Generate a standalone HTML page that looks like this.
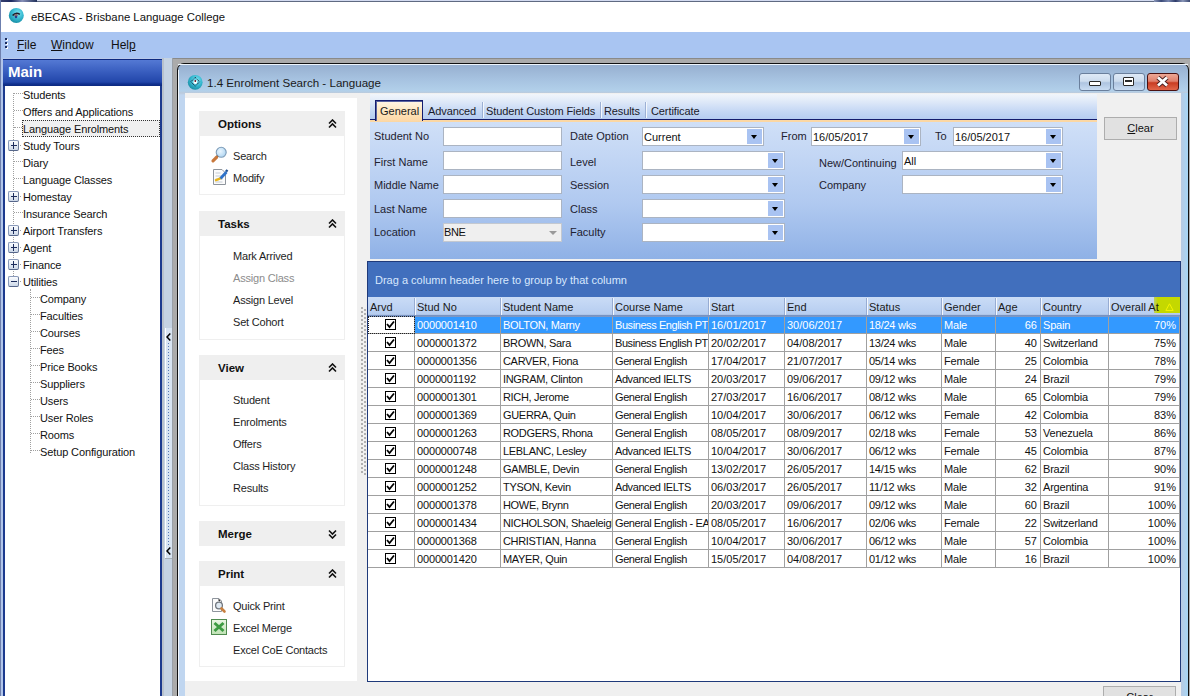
<!DOCTYPE html><html><head><meta charset="utf-8"><style>
*{box-sizing:border-box;margin:0;padding:0}
html,body{width:1190px;height:696px;overflow:hidden;background:#fff;font-family:"Liberation Sans",sans-serif;font-size:11px;color:#000}
div,svg{position:absolute}
.t{white-space:nowrap;line-height:1}
.gt{font-weight:bold;font-size:11.5px;white-space:nowrap;line-height:1;color:#111}
.item{white-space:nowrap;line-height:1;font-size:11px;color:#1e1e1e;letter-spacing:-0.2px}
.lbl{white-space:nowrap;line-height:1;font-size:11px;color:#1e2230}
.inp{height:19px;background:#fff;border:1px solid #abb4c2}
.dd{top:1px;right:1px;width:15px;height:15px;background:#a9c3f2}
.dd:after{content:"";position:absolute;left:4px;top:6px;border-left:3.5px solid transparent;border-right:3.5px solid transparent;border-top:4px solid #000}
.btn{background:#e1e1e1;border:1px solid #adadad;font-size:11px;text-align:center;line-height:20px;color:#111}
.cell{top:0;height:18px;border-right:1px solid #a0a0a0;border-bottom:1px solid #a0a0a0;white-space:nowrap;overflow:hidden;line-height:18px;padding-left:2px;font-size:11px;color:#111;letter-spacing:-0.2px}
.r{text-align:right;padding-right:3px;padding-left:0}
.sel .cell{background:#3399ff;color:#fff}
.cb{width:11px;height:11px;border:1px solid #000;background:#fff}
.ch{top:1px;height:18px;white-space:nowrap;line-height:19px;padding-left:2px;font-size:11px;color:#1a1a1a}
.pm{width:9px;height:9px;border:1px solid #7b8fae;background:linear-gradient(#fff,#dfe6f0)}
.dot{border-top:1px dotted #888}
</style></head><body>
<div style="left:0px;top:0px;width:1190px;height:32px;background:#fff"></div>
<div style="left:0px;top:0px;width:1190px;height:1px;background:#d2daf0"></div>
<div style="left:0px;top:1px;width:1190px;height:1px;background:#5f6a82"></div>
<div style="left:0px;top:0px;width:37px;height:2px;background:linear-gradient(90deg,#3a4270,#1c2a60 30%,#8890b8 60%,#20305a)"></div>
<div style="left:1154px;top:0px;width:36px;height:2px;background:linear-gradient(90deg,#8a96b8,#3a4a78 20%,#7a88b0 40%,#2e3c6a 60%,#8a96b8 80%,#3a4870)"></div>
<div style="left:0px;top:0px;width:1px;height:696px;background:#6c7fae"></div>
<svg style="left:8px;top:7px" width="17" height="17" viewBox="0 0 17 17">
<circle cx="8.3" cy="8.4" r="7.5" fill="url(#tg)"/>
<path d="M4.6 8.6 Q8 4.6 11.8 7.4" stroke="#1b1b2a" stroke-width="1.6" fill="none"/><circle cx="8" cy="8.4" r="1.7" fill="#8a6a6a"/><circle cx="8" cy="10" r="1.2" fill="#2a3a8a"/></svg>
<div class="t" style="left:31px;top:12px;font-size:11.3px;color:#111">eBECAS - Brisbane Language College</div>
<div style="left:1px;top:32px;width:1189px;height:27px;background:#a9c5f2"></div>
<div style="left:6px;top:39px;width:2px;height:2px;background:#fff"></div>
<div style="left:5px;top:38px;width:2px;height:2px;background:#1c2c5c"></div>
<div style="left:6px;top:43px;width:2px;height:2px;background:#fff"></div>
<div style="left:5px;top:42px;width:2px;height:2px;background:#1c2c5c"></div>
<div style="left:6px;top:47px;width:2px;height:2px;background:#fff"></div>
<div style="left:5px;top:46px;width:2px;height:2px;background:#1c2c5c"></div>
<div class="t" style="left:17px;top:39px;font-size:12px;color:#111"><u>F</u>ile</div>
<div class="t" style="left:51px;top:39px;font-size:12px;color:#111"><u>W</u>indow</div>
<div class="t" style="left:111px;top:39px;font-size:12px;color:#111">Hel<u>p</u></div>
<div style="left:0px;top:58px;width:3px;height:638px;background:#b2c6ea"></div>
<div style="left:0px;top:58px;width:1px;height:638px;background:#7f92bd"></div>
<div style="left:3px;top:59px;width:159px;height:637px;background:#fff;border:2px solid #1c3a8e;border-bottom:none"></div>
<div style="left:1px;top:58px;width:161px;height:1px;background:#b9c9ea"></div>
<div style="left:3px;top:59px;width:159px;height:27px;background:linear-gradient(#0e2a80 1px,#5479d4 1px,#3a5fc0 12px,#2246aa 23px,#10308e 25px,#0e2a80 27px)"></div>
<div style="left:0px;top:58px;width:3px;height:638px;background:#b2c6ea"></div>
<div style="left:0px;top:32px;width:1px;height:664px;background:#6f80ad"></div>
<div class="t" style="left:8px;top:64px;font-size:15px;font-weight:bold;color:#fff">Main</div>
<div style="left:13px;top:93px;width:1px;height:187px;border-left:1px dotted #a0a0a0"></div>
<div style="left:30px;top:289px;width:1px;height:164px;border-left:1px dotted #a0a0a0"></div>
<div style="left:14px;top:93px;width:9px;height:1px;border-top:1px dotted #a0a0a0"></div>
<div class="t" style="left:23px;top:90px;font-size:11px;color:#111;letter-spacing:-0.12px">Students</div>
<div style="left:14px;top:110px;width:9px;height:1px;border-top:1px dotted #a0a0a0"></div>
<div class="t" style="left:23px;top:107px;font-size:11px;color:#111;letter-spacing:-0.12px">Offers and Applications</div>
<div style="left:22px;top:120px;width:138px;height:17px;background:#f0f0f0;border:1px dotted #333"></div>
<div style="left:14px;top:127px;width:8px;height:1px;border-top:1px dotted #a0a0a0"></div>
<div class="t" style="left:23px;top:124px;font-size:11px;color:#111;letter-spacing:-0.12px">Language Enrolments</div>
<div style="left:8px;top:140px;width:11px;height:11px;border:1px solid #8a9aba;border-bottom-color:#56668a;border-right-color:#6a7a9a;border-radius:2px;background:linear-gradient(#fafcff,#cdd8e8)"></div>
<div style="left:11px;top:145px;width:6px;height:1px;background:#1c2c5c"></div>
<div style="left:13px;top:142px;width:1px;height:7px;background:#1c2c5c"></div>
<div style="left:20px;top:145px;width:1px;height:1px;background:#a0a0a0"></div>
<div class="t" style="left:23px;top:141px;font-size:11px;color:#111;letter-spacing:-0.12px">Study Tours</div>
<div style="left:14px;top:161px;width:9px;height:1px;border-top:1px dotted #a0a0a0"></div>
<div class="t" style="left:23px;top:158px;font-size:11px;color:#111;letter-spacing:-0.12px">Diary</div>
<div style="left:14px;top:178px;width:9px;height:1px;border-top:1px dotted #a0a0a0"></div>
<div class="t" style="left:23px;top:175px;font-size:11px;color:#111;letter-spacing:-0.12px">Language Classes</div>
<div style="left:8px;top:191px;width:11px;height:11px;border:1px solid #8a9aba;border-bottom-color:#56668a;border-right-color:#6a7a9a;border-radius:2px;background:linear-gradient(#fafcff,#cdd8e8)"></div>
<div style="left:11px;top:196px;width:6px;height:1px;background:#1c2c5c"></div>
<div style="left:13px;top:193px;width:1px;height:7px;background:#1c2c5c"></div>
<div style="left:20px;top:196px;width:1px;height:1px;background:#a0a0a0"></div>
<div class="t" style="left:23px;top:192px;font-size:11px;color:#111;letter-spacing:-0.12px">Homestay</div>
<div style="left:14px;top:212px;width:9px;height:1px;border-top:1px dotted #a0a0a0"></div>
<div class="t" style="left:23px;top:209px;font-size:11px;color:#111;letter-spacing:-0.12px">Insurance Search</div>
<div style="left:8px;top:225px;width:11px;height:11px;border:1px solid #8a9aba;border-bottom-color:#56668a;border-right-color:#6a7a9a;border-radius:2px;background:linear-gradient(#fafcff,#cdd8e8)"></div>
<div style="left:11px;top:230px;width:6px;height:1px;background:#1c2c5c"></div>
<div style="left:13px;top:227px;width:1px;height:7px;background:#1c2c5c"></div>
<div style="left:20px;top:230px;width:1px;height:1px;background:#a0a0a0"></div>
<div class="t" style="left:23px;top:226px;font-size:11px;color:#111;letter-spacing:-0.12px">Airport Transfers</div>
<div style="left:8px;top:242px;width:11px;height:11px;border:1px solid #8a9aba;border-bottom-color:#56668a;border-right-color:#6a7a9a;border-radius:2px;background:linear-gradient(#fafcff,#cdd8e8)"></div>
<div style="left:11px;top:247px;width:6px;height:1px;background:#1c2c5c"></div>
<div style="left:13px;top:244px;width:1px;height:7px;background:#1c2c5c"></div>
<div style="left:20px;top:247px;width:1px;height:1px;background:#a0a0a0"></div>
<div class="t" style="left:23px;top:243px;font-size:11px;color:#111;letter-spacing:-0.12px">Agent</div>
<div style="left:8px;top:259px;width:11px;height:11px;border:1px solid #8a9aba;border-bottom-color:#56668a;border-right-color:#6a7a9a;border-radius:2px;background:linear-gradient(#fafcff,#cdd8e8)"></div>
<div style="left:11px;top:264px;width:6px;height:1px;background:#1c2c5c"></div>
<div style="left:13px;top:261px;width:1px;height:7px;background:#1c2c5c"></div>
<div style="left:20px;top:264px;width:1px;height:1px;background:#a0a0a0"></div>
<div class="t" style="left:23px;top:260px;font-size:11px;color:#111;letter-spacing:-0.12px">Finance</div>
<div style="left:8px;top:276px;width:11px;height:11px;border:1px solid #8a9aba;border-bottom-color:#56668a;border-right-color:#6a7a9a;border-radius:2px;background:linear-gradient(#fafcff,#cdd8e8)"></div>
<div style="left:11px;top:281px;width:6px;height:1px;background:#1c2c5c"></div>
<div style="left:20px;top:281px;width:1px;height:1px;background:#a0a0a0"></div>
<div class="t" style="left:23px;top:277px;font-size:11px;color:#111;letter-spacing:-0.12px">Utilities</div>
<div style="left:31px;top:297px;width:9px;height:1px;border-top:1px dotted #a0a0a0"></div>
<div class="t" style="left:40px;top:294px;font-size:11px;color:#111;letter-spacing:-0.12px">Company</div>
<div style="left:31px;top:314px;width:9px;height:1px;border-top:1px dotted #a0a0a0"></div>
<div class="t" style="left:40px;top:311px;font-size:11px;color:#111;letter-spacing:-0.12px">Faculties</div>
<div style="left:31px;top:331px;width:9px;height:1px;border-top:1px dotted #a0a0a0"></div>
<div class="t" style="left:40px;top:328px;font-size:11px;color:#111;letter-spacing:-0.12px">Courses</div>
<div style="left:31px;top:348px;width:9px;height:1px;border-top:1px dotted #a0a0a0"></div>
<div class="t" style="left:40px;top:345px;font-size:11px;color:#111;letter-spacing:-0.12px">Fees</div>
<div style="left:31px;top:365px;width:9px;height:1px;border-top:1px dotted #a0a0a0"></div>
<div class="t" style="left:40px;top:362px;font-size:11px;color:#111;letter-spacing:-0.12px">Price Books</div>
<div style="left:31px;top:382px;width:9px;height:1px;border-top:1px dotted #a0a0a0"></div>
<div class="t" style="left:40px;top:379px;font-size:11px;color:#111;letter-spacing:-0.12px">Suppliers</div>
<div style="left:31px;top:399px;width:9px;height:1px;border-top:1px dotted #a0a0a0"></div>
<div class="t" style="left:40px;top:396px;font-size:11px;color:#111;letter-spacing:-0.12px">Users</div>
<div style="left:31px;top:416px;width:9px;height:1px;border-top:1px dotted #a0a0a0"></div>
<div class="t" style="left:40px;top:413px;font-size:11px;color:#111;letter-spacing:-0.12px">User Roles</div>
<div style="left:31px;top:433px;width:9px;height:1px;border-top:1px dotted #a0a0a0"></div>
<div class="t" style="left:40px;top:430px;font-size:11px;color:#111;letter-spacing:-0.12px">Rooms</div>
<div style="left:31px;top:450px;width:9px;height:1px;border-top:1px dotted #a0a0a0"></div>
<div class="t" style="left:40px;top:447px;font-size:11px;color:#111;letter-spacing:-0.12px">Setup Configuration</div>
<div style="left:162px;top:58px;width:11px;height:638px;background:#c5d3e3"></div>
<div style="left:162px;top:58px;width:2px;height:638px;background:#b9c2cc"></div>
<div style="left:172px;top:58px;width:1px;height:638px;background:#9aa0a8"></div>
<div style="left:165px;top:328px;width:7px;height:231px;background:linear-gradient(90deg,#fff 1px,#d8e4f2 1px);border-bottom:1px solid #a8b0b8"></div>
<div style="left:168px;top:343px;width:1px;height:1px;background:#5a7cb8"></div>
<div style="left:168px;top:346px;width:1px;height:1px;background:#5a7cb8"></div>
<div style="left:168px;top:349px;width:1px;height:1px;background:#5a7cb8"></div>
<div style="left:168px;top:352px;width:1px;height:1px;background:#5a7cb8"></div>
<div style="left:168px;top:355px;width:1px;height:1px;background:#5a7cb8"></div>
<div style="left:168px;top:358px;width:1px;height:1px;background:#5a7cb8"></div>
<div style="left:168px;top:361px;width:1px;height:1px;background:#5a7cb8"></div>
<div style="left:168px;top:364px;width:1px;height:1px;background:#5a7cb8"></div>
<div style="left:168px;top:367px;width:1px;height:1px;background:#5a7cb8"></div>
<div style="left:168px;top:370px;width:1px;height:1px;background:#5a7cb8"></div>
<div style="left:168px;top:373px;width:1px;height:1px;background:#5a7cb8"></div>
<div style="left:168px;top:376px;width:1px;height:1px;background:#5a7cb8"></div>
<div style="left:168px;top:379px;width:1px;height:1px;background:#5a7cb8"></div>
<div style="left:168px;top:382px;width:1px;height:1px;background:#5a7cb8"></div>
<div style="left:168px;top:385px;width:1px;height:1px;background:#5a7cb8"></div>
<div style="left:168px;top:388px;width:1px;height:1px;background:#5a7cb8"></div>
<div style="left:168px;top:391px;width:1px;height:1px;background:#5a7cb8"></div>
<div style="left:168px;top:394px;width:1px;height:1px;background:#5a7cb8"></div>
<div style="left:168px;top:397px;width:1px;height:1px;background:#5a7cb8"></div>
<div style="left:168px;top:400px;width:1px;height:1px;background:#5a7cb8"></div>
<div style="left:168px;top:403px;width:1px;height:1px;background:#5a7cb8"></div>
<div style="left:168px;top:406px;width:1px;height:1px;background:#5a7cb8"></div>
<div style="left:168px;top:409px;width:1px;height:1px;background:#5a7cb8"></div>
<div style="left:168px;top:412px;width:1px;height:1px;background:#5a7cb8"></div>
<div style="left:168px;top:415px;width:1px;height:1px;background:#5a7cb8"></div>
<div style="left:168px;top:418px;width:1px;height:1px;background:#5a7cb8"></div>
<div style="left:168px;top:421px;width:1px;height:1px;background:#5a7cb8"></div>
<div style="left:168px;top:424px;width:1px;height:1px;background:#5a7cb8"></div>
<div style="left:168px;top:427px;width:1px;height:1px;background:#5a7cb8"></div>
<div style="left:168px;top:430px;width:1px;height:1px;background:#5a7cb8"></div>
<div style="left:168px;top:433px;width:1px;height:1px;background:#5a7cb8"></div>
<div style="left:168px;top:436px;width:1px;height:1px;background:#5a7cb8"></div>
<div style="left:168px;top:439px;width:1px;height:1px;background:#5a7cb8"></div>
<div style="left:168px;top:442px;width:1px;height:1px;background:#5a7cb8"></div>
<div style="left:168px;top:445px;width:1px;height:1px;background:#5a7cb8"></div>
<div style="left:168px;top:448px;width:1px;height:1px;background:#5a7cb8"></div>
<div style="left:168px;top:451px;width:1px;height:1px;background:#5a7cb8"></div>
<div style="left:168px;top:454px;width:1px;height:1px;background:#5a7cb8"></div>
<div style="left:168px;top:457px;width:1px;height:1px;background:#5a7cb8"></div>
<div style="left:168px;top:460px;width:1px;height:1px;background:#5a7cb8"></div>
<div style="left:168px;top:463px;width:1px;height:1px;background:#5a7cb8"></div>
<div style="left:168px;top:466px;width:1px;height:1px;background:#5a7cb8"></div>
<div style="left:168px;top:469px;width:1px;height:1px;background:#5a7cb8"></div>
<div style="left:168px;top:472px;width:1px;height:1px;background:#5a7cb8"></div>
<div style="left:168px;top:475px;width:1px;height:1px;background:#5a7cb8"></div>
<div style="left:168px;top:478px;width:1px;height:1px;background:#5a7cb8"></div>
<div style="left:168px;top:481px;width:1px;height:1px;background:#5a7cb8"></div>
<div style="left:168px;top:484px;width:1px;height:1px;background:#5a7cb8"></div>
<div style="left:168px;top:487px;width:1px;height:1px;background:#5a7cb8"></div>
<div style="left:168px;top:490px;width:1px;height:1px;background:#5a7cb8"></div>
<div style="left:168px;top:493px;width:1px;height:1px;background:#5a7cb8"></div>
<div style="left:168px;top:496px;width:1px;height:1px;background:#5a7cb8"></div>
<div style="left:168px;top:499px;width:1px;height:1px;background:#5a7cb8"></div>
<div style="left:168px;top:502px;width:1px;height:1px;background:#5a7cb8"></div>
<div style="left:168px;top:505px;width:1px;height:1px;background:#5a7cb8"></div>
<div style="left:168px;top:508px;width:1px;height:1px;background:#5a7cb8"></div>
<div style="left:168px;top:511px;width:1px;height:1px;background:#5a7cb8"></div>
<div style="left:168px;top:514px;width:1px;height:1px;background:#5a7cb8"></div>
<div style="left:168px;top:517px;width:1px;height:1px;background:#5a7cb8"></div>
<div style="left:168px;top:520px;width:1px;height:1px;background:#5a7cb8"></div>
<div style="left:168px;top:523px;width:1px;height:1px;background:#5a7cb8"></div>
<div style="left:168px;top:526px;width:1px;height:1px;background:#5a7cb8"></div>
<div style="left:168px;top:529px;width:1px;height:1px;background:#5a7cb8"></div>
<div style="left:168px;top:532px;width:1px;height:1px;background:#5a7cb8"></div>
<div style="left:168px;top:535px;width:1px;height:1px;background:#5a7cb8"></div>
<div style="left:168px;top:538px;width:1px;height:1px;background:#5a7cb8"></div>
<div style="left:168px;top:541px;width:1px;height:1px;background:#5a7cb8"></div>
<div style="left:168px;top:544px;width:1px;height:1px;background:#5a7cb8"></div>
<svg style="left:166px;top:333px" width="5" height="8" viewBox="0 0 5 8"><path d="M4.3 0.5 L1 4 L4.3 7.5" stroke="#000" stroke-width="1.5" fill="none"/></svg>
<svg style="left:166px;top:547px" width="5" height="8" viewBox="0 0 5 8"><path d="M4.3 0.5 L1 4 L4.3 7.5" stroke="#000" stroke-width="1.5" fill="none"/></svg>
<div style="left:173px;top:58px;width:1017px;height:638px;background:#ababab"></div>
<div style="left:173px;top:58px;width:1017px;height:1px;background:#8a8a8a"></div>
<div style="left:177px;top:63px;width:1012px;height:640px;background:linear-gradient(#97b0d0 1px,#a6c2e0 15px,#b2d0ea 27px,#bccadb 29px,#c0d6f0 31px);border:1px solid #111;border-radius:7px 7px 0 0"></div>
<div style="left:178px;top:64px;width:1010px;height:1px;background:#eef5fc"></div>
<div style="left:178px;top:70px;width:1px;height:626px;background:#f2f7fc"></div>
<svg style="left:187px;top:74px" width="17" height="17" viewBox="0 0 17 17">
<defs><radialGradient id="tg" cx="0.6" cy="0.35" r="0.75"><stop offset="0" stop-color="#7fe6f4"/><stop offset="0.5" stop-color="#35b8d0"/><stop offset="1" stop-color="#12849a"/></radialGradient></defs>
<circle cx="8.2" cy="8.3" r="7.4" fill="url(#tg)"/>
<path d="M8.2 3.4 L12.6 7.8 L8.2 12.2 L3.8 7.8 Z" fill="none" stroke="#20203a" stroke-width="1" stroke-dasharray="1.2 0.8"/>
<circle cx="8.3" cy="8" r="1.9" fill="#fff"/><circle cx="8.3" cy="7" r="0.9" fill="#5a1020"/></svg>
<div class="t" style="left:207px;top:77px;font-size:11.6px;color:#1a1a1a">1.4 Enrolment Search - Language</div>
<div style="left:1079px;top:73px;width:32px;height:18px;border:1px solid #6a7f9c;border-radius:3px;background:linear-gradient(#dfeaf7,#cddcee 45%,#aec4e0 55%,#c9dcf2)"></div>
<div style="left:1089px;top:81px;width:12px;height:5px;border:1px solid #2a2a2a;background:#fff;border-radius:1px"></div>
<div style="left:1113px;top:73px;width:32px;height:18px;border:1px solid #6a7f9c;border-radius:3px;background:linear-gradient(#dfeaf7,#cddcee 45%,#aec4e0 55%,#c9dcf2)"></div>
<div style="left:1123px;top:77px;width:11px;height:9px;border:1px solid #2a2a2a;border-radius:1px;background:#fff"></div>
<div style="left:1125px;top:80px;width:7px;height:2px;background:#2a2a2a"></div>
<div style="left:1147px;top:73px;width:32px;height:18px;border:1px solid #4a1010;border-radius:3px;background:linear-gradient(#eea896,#e0806c 45%,#c93c22 55%,#e2664a)"></div>
<svg style="left:1155px;top:75px" width="15" height="13" viewBox="0 0 15 13"><path d="M3 2.5 L12 10.5 M12 2.5 L3 10.5" stroke="#4a2020" stroke-width="4.6"/><path d="M3 2.5 L12 10.5 M12 2.5 L3 10.5" stroke="#fff" stroke-width="2.8"/></svg>
<div style="left:185px;top:93px;width:996px;height:603px;background:#f0f0f0"></div>
<div style="left:1181px;top:93px;width:7px;height:603px;background:linear-gradient(90deg,#b8cae2,#a6d6f6)"></div>
<div style="left:185px;top:98px;width:172px;height:583px;background:#fff"></div>
<div style="left:199px;top:111px;width:146px;height:25px;background:#efefef"></div>
<div class="gt" style="left:218px;top:119px;">Options</div>
<svg style="left:328px;top:119px" width="9" height="10" viewBox="0 0 9 10"><path d="M1 4.5 L4.5 1 L8 4.5 M1 8.5 L4.5 5 L8 8.5" stroke="#111" stroke-width="1.6" fill="none"/></svg>
<div style="left:199px;top:136px;width:146px;height:59px;background:#fff;border:1px solid #efefef;border-top:none"></div>
<div class="item" style="left:233px;top:151px;color:#1e1e1e">Search</div>
<div class="item" style="left:233px;top:173px;color:#1e1e1e">Modify</div>
<svg style="left:208px;top:144px" width="22" height="22" viewBox="208 144 22 22">
<defs><radialGradient id="lens" cx="0.4" cy="0.4" r="0.7"><stop offset="0" stop-color="#eaf6ff"/><stop offset="1" stop-color="#a9d2f0"/></radialGradient></defs>
<circle cx="221.2" cy="152.3" r="5" fill="url(#lens)" stroke="#7e9cb8" stroke-width="1.1"/>
<path d="M217.6 156 L216.4 157.2" stroke="#333" stroke-width="2"/>
<path d="M216.5 157.3 L213 160.8" stroke="#c8783c" stroke-width="3.2" stroke-linecap="round"/></svg>
<svg style="left:210px;top:166px" width="20" height="21" viewBox="210 166 20 21">
<path d="M213.5 169.5 H222 L225.5 173 V184.5 H213.5 Z" fill="#fbfbfb" stroke="#8e949c" stroke-width="1"/>
<path d="M215.5 173h5M215.5 176h7M215.5 179h7M215.5 182h7" stroke="#b8c0cc" stroke-width="0.8"/>
<path d="M215 180.5 Q218 179.5 221 178" stroke="#e8b418" stroke-width="2.2" fill="none"/>
<path d="M220.5 178.5 L226.5 172" stroke="#2f73c9" stroke-width="2.8"/><path d="M226 171.5 L227.5 170" stroke="#1d4f90" stroke-width="2.4"/></svg>
<div style="left:199px;top:211px;width:146px;height:25px;background:#efefef"></div>
<div class="gt" style="left:218px;top:219px;">Tasks</div>
<svg style="left:328px;top:219px" width="9" height="10" viewBox="0 0 9 10"><path d="M1 4.5 L4.5 1 L8 4.5 M1 8.5 L4.5 5 L8 8.5" stroke="#111" stroke-width="1.6" fill="none"/></svg>
<div style="left:199px;top:236px;width:146px;height:104px;background:#fff;border:1px solid #efefef;border-top:none"></div>
<div class="item" style="left:233px;top:251px;color:#1e1e1e">Mark Arrived</div>
<div class="item" style="left:233px;top:273px;color:#8c8c8c">Assign Class</div>
<div class="item" style="left:233px;top:295px;color:#1e1e1e">Assign Level</div>
<div class="item" style="left:233px;top:317px;color:#1e1e1e">Set Cohort</div>
<div style="left:199px;top:355px;width:146px;height:25px;background:#efefef"></div>
<div class="gt" style="left:218px;top:363px;">View</div>
<svg style="left:328px;top:363px" width="9" height="10" viewBox="0 0 9 10"><path d="M1 4.5 L4.5 1 L8 4.5 M1 8.5 L4.5 5 L8 8.5" stroke="#111" stroke-width="1.6" fill="none"/></svg>
<div style="left:199px;top:380px;width:146px;height:126px;background:#fff;border:1px solid #efefef;border-top:none"></div>
<div class="item" style="left:233px;top:395px;color:#1e1e1e">Student</div>
<div class="item" style="left:233px;top:417px;color:#1e1e1e">Enrolments</div>
<div class="item" style="left:233px;top:439px;color:#1e1e1e">Offers</div>
<div class="item" style="left:233px;top:461px;color:#1e1e1e">Class History</div>
<div class="item" style="left:233px;top:483px;color:#1e1e1e">Results</div>
<div style="left:199px;top:521px;width:146px;height:25px;background:#efefef"></div>
<div class="gt" style="left:218px;top:529px;">Merge</div>
<svg style="left:328px;top:529px" width="9" height="10" viewBox="0 0 9 10"><path d="M1 1.5 L4.5 5 L8 1.5 M1 5.5 L4.5 9 L8 5.5" stroke="#111" stroke-width="1.6" fill="none"/></svg>
<div style="left:199px;top:561px;width:146px;height:25px;background:#efefef"></div>
<div class="gt" style="left:218px;top:569px;">Print</div>
<svg style="left:328px;top:569px" width="9" height="10" viewBox="0 0 9 10"><path d="M1 4.5 L4.5 1 L8 4.5 M1 8.5 L4.5 5 L8 8.5" stroke="#111" stroke-width="1.6" fill="none"/></svg>
<div style="left:199px;top:586px;width:146px;height:81px;background:#fff;border:1px solid #efefef;border-top:none"></div>
<div class="item" style="left:233px;top:601px;color:#1e1e1e">Quick Print</div>
<div class="item" style="left:233px;top:623px;color:#1e1e1e">Excel Merge</div>
<div class="item" style="left:233px;top:645px;color:#1e1e1e">Excel CoE Contacts</div>
<svg style="left:210px;top:596px" width="18" height="19" viewBox="210 596 18 19">
<path d="M212.5 598.5 H219 L221.5 601 V611.5 H212.5 Z" fill="#fbfbfb" stroke="#8e949c"/>
<circle cx="219" cy="605.5" r="3.4" fill="#dfe9f2" stroke="#70767e" stroke-width="1.3"/>
<path d="M218.5 599.5 L220 601" stroke="#333" stroke-width="1.4"/>
<path d="M221.5 608.5 L224.5 611.5" stroke="#c88040" stroke-width="2.6" stroke-linecap="round"/></svg>
<svg style="left:210px;top:618px" width="18" height="18" viewBox="210 618 18 18">
<defs><linearGradient id="xg" x1="0" y1="0" x2="0" y2="1"><stop offset="0" stop-color="#eaf6e4"/><stop offset="1" stop-color="#bfe2b4"/></linearGradient></defs>
<rect x="211.5" y="619.5" width="15" height="15" fill="url(#xg)" stroke="#4f8a4f"/>
<path d="M214.5 623 L223.5 631 M223.5 623 L214.5 631" stroke="#3d9b42" stroke-width="3"/></svg>
<div style="left:361px;top:307px;width:2px;height:2px;background:#b0b0b0"></div>
<div style="left:364px;top:309px;width:2px;height:2px;background:#b0b0b0"></div>
<div style="left:361px;top:311px;width:2px;height:2px;background:#b0b0b0"></div>
<div style="left:364px;top:313px;width:2px;height:2px;background:#b0b0b0"></div>
<div style="left:361px;top:315px;width:2px;height:2px;background:#b0b0b0"></div>
<div style="left:364px;top:317px;width:2px;height:2px;background:#b0b0b0"></div>
<div style="left:361px;top:319px;width:2px;height:2px;background:#b0b0b0"></div>
<div style="left:364px;top:321px;width:2px;height:2px;background:#b0b0b0"></div>
<div style="left:361px;top:323px;width:2px;height:2px;background:#b0b0b0"></div>
<div style="left:364px;top:325px;width:2px;height:2px;background:#b0b0b0"></div>
<div style="left:361px;top:327px;width:2px;height:2px;background:#b0b0b0"></div>
<div style="left:364px;top:329px;width:2px;height:2px;background:#b0b0b0"></div>
<div style="left:361px;top:331px;width:2px;height:2px;background:#b0b0b0"></div>
<div style="left:364px;top:333px;width:2px;height:2px;background:#b0b0b0"></div>
<div style="left:361px;top:335px;width:2px;height:2px;background:#b0b0b0"></div>
<div style="left:364px;top:337px;width:2px;height:2px;background:#b0b0b0"></div>
<div style="left:361px;top:339px;width:2px;height:2px;background:#b0b0b0"></div>
<div style="left:364px;top:341px;width:2px;height:2px;background:#b0b0b0"></div>
<div style="left:361px;top:343px;width:2px;height:2px;background:#b0b0b0"></div>
<div style="left:364px;top:345px;width:2px;height:2px;background:#b0b0b0"></div>
<div style="left:361px;top:347px;width:2px;height:2px;background:#b0b0b0"></div>
<div style="left:364px;top:349px;width:2px;height:2px;background:#b0b0b0"></div>
<div style="left:361px;top:351px;width:2px;height:2px;background:#b0b0b0"></div>
<div style="left:364px;top:353px;width:2px;height:2px;background:#b0b0b0"></div>
<div style="left:361px;top:355px;width:2px;height:2px;background:#b0b0b0"></div>
<div style="left:364px;top:357px;width:2px;height:2px;background:#b0b0b0"></div>
<div style="left:361px;top:359px;width:2px;height:2px;background:#b0b0b0"></div>
<div style="left:364px;top:361px;width:2px;height:2px;background:#b0b0b0"></div>
<div style="left:361px;top:363px;width:2px;height:2px;background:#b0b0b0"></div>
<div style="left:364px;top:365px;width:2px;height:2px;background:#b0b0b0"></div>
<div style="left:361px;top:367px;width:2px;height:2px;background:#b0b0b0"></div>
<div style="left:364px;top:369px;width:2px;height:2px;background:#b0b0b0"></div>
<div style="left:361px;top:371px;width:2px;height:2px;background:#b0b0b0"></div>
<div style="left:364px;top:373px;width:2px;height:2px;background:#b0b0b0"></div>
<div style="left:361px;top:375px;width:2px;height:2px;background:#b0b0b0"></div>
<div style="left:364px;top:377px;width:2px;height:2px;background:#b0b0b0"></div>
<div style="left:361px;top:379px;width:2px;height:2px;background:#b0b0b0"></div>
<div style="left:364px;top:381px;width:2px;height:2px;background:#b0b0b0"></div>
<div style="left:361px;top:383px;width:2px;height:2px;background:#b0b0b0"></div>
<div style="left:364px;top:385px;width:2px;height:2px;background:#b0b0b0"></div>
<div style="left:361px;top:387px;width:2px;height:2px;background:#b0b0b0"></div>
<div style="left:364px;top:389px;width:2px;height:2px;background:#b0b0b0"></div>
<div style="left:361px;top:391px;width:2px;height:2px;background:#b0b0b0"></div>
<div style="left:364px;top:393px;width:2px;height:2px;background:#b0b0b0"></div>
<div style="left:361px;top:395px;width:2px;height:2px;background:#b0b0b0"></div>
<div style="left:364px;top:397px;width:2px;height:2px;background:#b0b0b0"></div>
<div style="left:361px;top:399px;width:2px;height:2px;background:#b0b0b0"></div>
<div style="left:364px;top:401px;width:2px;height:2px;background:#b0b0b0"></div>
<div style="left:361px;top:403px;width:2px;height:2px;background:#b0b0b0"></div>
<div style="left:364px;top:405px;width:2px;height:2px;background:#b0b0b0"></div>
<div style="left:361px;top:407px;width:2px;height:2px;background:#b0b0b0"></div>
<div style="left:364px;top:409px;width:2px;height:2px;background:#b0b0b0"></div>
<div style="left:361px;top:411px;width:2px;height:2px;background:#b0b0b0"></div>
<div style="left:364px;top:413px;width:2px;height:2px;background:#b0b0b0"></div>
<div style="left:361px;top:415px;width:2px;height:2px;background:#b0b0b0"></div>
<div style="left:364px;top:417px;width:2px;height:2px;background:#b0b0b0"></div>
<div style="left:361px;top:419px;width:2px;height:2px;background:#b0b0b0"></div>
<div style="left:364px;top:421px;width:2px;height:2px;background:#b0b0b0"></div>
<div style="left:361px;top:423px;width:2px;height:2px;background:#b0b0b0"></div>
<div style="left:364px;top:425px;width:2px;height:2px;background:#b0b0b0"></div>
<div style="left:361px;top:427px;width:2px;height:2px;background:#b0b0b0"></div>
<div style="left:364px;top:429px;width:2px;height:2px;background:#b0b0b0"></div>
<div style="left:361px;top:431px;width:2px;height:2px;background:#b0b0b0"></div>
<div style="left:364px;top:433px;width:2px;height:2px;background:#b0b0b0"></div>
<div style="left:361px;top:435px;width:2px;height:2px;background:#b0b0b0"></div>
<div style="left:364px;top:437px;width:2px;height:2px;background:#b0b0b0"></div>
<div style="left:361px;top:439px;width:2px;height:2px;background:#b0b0b0"></div>
<div style="left:364px;top:441px;width:2px;height:2px;background:#b0b0b0"></div>
<div style="left:361px;top:443px;width:2px;height:2px;background:#b0b0b0"></div>
<div style="left:364px;top:445px;width:2px;height:2px;background:#b0b0b0"></div>
<div style="left:361px;top:447px;width:2px;height:2px;background:#b0b0b0"></div>
<div style="left:364px;top:449px;width:2px;height:2px;background:#b0b0b0"></div>
<div style="left:361px;top:451px;width:2px;height:2px;background:#b0b0b0"></div>
<div style="left:364px;top:453px;width:2px;height:2px;background:#b0b0b0"></div>
<div style="left:361px;top:455px;width:2px;height:2px;background:#b0b0b0"></div>
<div style="left:364px;top:457px;width:2px;height:2px;background:#b0b0b0"></div>
<div style="left:361px;top:459px;width:2px;height:2px;background:#b0b0b0"></div>
<div style="left:364px;top:461px;width:2px;height:2px;background:#b0b0b0"></div>
<div style="left:361px;top:463px;width:2px;height:2px;background:#b0b0b0"></div>
<div style="left:364px;top:465px;width:2px;height:2px;background:#b0b0b0"></div>
<div style="left:361px;top:467px;width:2px;height:2px;background:#b0b0b0"></div>
<div style="left:364px;top:469px;width:2px;height:2px;background:#b0b0b0"></div>
<div style="left:361px;top:471px;width:2px;height:2px;background:#b0b0b0"></div>
<div style="left:364px;top:473px;width:2px;height:2px;background:#b0b0b0"></div>
<div style="left:370px;top:94px;width:727px;height:165px;background:linear-gradient(#dfeafa 0px,#cfdff7 30px,#b0c9f0 110px,#8fb1e6 165px)"></div>
<div style="left:370px;top:94px;width:727px;height:26px;background:linear-gradient(#f1f5fb,#e3ecf9 6px,#c3d6f4 18px,#b3cbf0 26px)"></div>
<div style="left:370px;top:119px;width:727px;height:1px;background:#141c6e"></div>
<div style="left:370px;top:120px;width:727px;height:2px;background:#fbd7a4"></div>
<div style="left:375px;top:100px;width:48px;height:21px;background:linear-gradient(#fff6e6,#fde6c0 50%,#fdd8a6);border:1px solid #141c6e;border-bottom:none;box-shadow:inset 1px 1px #5a64a0"></div>
<div class="t" style="left:380px;top:106px;font-size:11px;color:#1a1a1a">General</div>
<div class="t" style="left:428px;top:106px;font-size:11px;color:#1a1a2a;letter-spacing:-0.1px">Advanced</div>
<div style="left:482px;top:102px;width:1px;height:16px;background:#9cb0d4;box-shadow:1px 0 #f4f8fd"></div>
<div class="t" style="left:486px;top:106px;font-size:11px;color:#1a1a2a;letter-spacing:-0.1px">Student Custom Fields</div>
<div style="left:600px;top:102px;width:1px;height:16px;background:#9cb0d4;box-shadow:1px 0 #f4f8fd"></div>
<div class="t" style="left:604px;top:106px;font-size:11px;color:#1a1a2a;letter-spacing:-0.1px">Results</div>
<div style="left:645px;top:102px;width:1px;height:16px;background:#9cb0d4;box-shadow:1px 0 #f4f8fd"></div>
<div class="t" style="left:651px;top:106px;font-size:11px;color:#1a1a2a;letter-spacing:-0.1px">Certificate</div>
<div class="lbl" style="left:374px;top:131px;">Student No</div>
<div class="lbl" style="left:374px;top:157px;">First Name</div>
<div class="lbl" style="left:374px;top:180px;">Middle Name</div>
<div class="lbl" style="left:374px;top:204px;">Last Name</div>
<div class="lbl" style="left:374px;top:227px;">Location</div>
<div class="lbl" style="left:570px;top:131px;">Date Option</div>
<div class="lbl" style="left:570px;top:157px;">Level</div>
<div class="lbl" style="left:570px;top:180px;">Session</div>
<div class="lbl" style="left:570px;top:204px;">Class</div>
<div class="lbl" style="left:570px;top:227px;">Faculty</div>
<div style="left:443px;top:127px;width:119px;height:19px;background:#fff;border:1px solid #abb4c2"></div>
<div style="left:443px;top:151px;width:119px;height:19px;background:#fff;border:1px solid #abb4c2"></div>
<div style="left:443px;top:175px;width:119px;height:19px;background:#fff;border:1px solid #abb4c2"></div>
<div style="left:443px;top:199px;width:119px;height:19px;background:#fff;border:1px solid #abb4c2"></div>
<div style="left:443px;top:223px;width:119px;height:19px;background:#efefef;border:1px solid #c3c8d0"></div>
<div class="lbl" style="left:444px;top:227px;color:#111;letter-spacing:-0.4px">BNE</div>
<svg style="left:549px;top:231px" width="8" height="4" viewBox="0 0 8 4"><path d="M0 0 H8 L4 4Z" fill="#9a9a9a"/></svg>
<div class="inp" style="left:642px;top:127px;width:122px"><div class="dd"></div></div>
<div class="lbl" style="left:644px;top:132px;color:#111">Current</div>
<div class="inp" style="left:642px;top:151px;width:143px"><div class="dd"></div></div>
<div class="inp" style="left:642px;top:175px;width:143px"><div class="dd"></div></div>
<div class="inp" style="left:642px;top:199px;width:143px"><div class="dd"></div></div>
<div class="inp" style="left:642px;top:223px;width:143px"><div class="dd"></div></div>
<div class="lbl" style="left:781px;top:131px;">From</div>
<div class="inp" style="left:811px;top:127px;width:110px"><div class="dd"></div></div>
<div class="lbl" style="left:813px;top:132px;color:#111">16/05/2017</div>
<div class="lbl" style="left:935px;top:131px;">To</div>
<div class="inp" style="left:953px;top:127px;width:110px"><div class="dd"></div></div>
<div class="lbl" style="left:955px;top:132px;color:#111">16/05/2017</div>
<div class="lbl" style="left:819px;top:158px;">New/Continuing</div>
<div class="inp" style="left:902px;top:151px;width:161px"><div class="dd"></div></div>
<div class="lbl" style="left:904px;top:156px;color:#111">All</div>
<div class="lbl" style="left:819px;top:180px;">Company</div>
<div class="inp" style="left:902px;top:175px;width:161px"><div class="dd"></div></div>
<div class="btn" style="left:1104px;top:117px;width:73px;height:23px"><u>C</u>lear</div>
<div class="btn" style="left:1103px;top:686px;width:73px;height:23px"><u>C</u>lear</div>
<div style="left:367px;top:261px;width:814px;height:421px;background:#fff;border:1px solid #1f3a7a"></div>
<div style="left:368px;top:262px;width:812px;height:35px;background:#416fbd"></div>
<div class="t" style="left:375px;top:275px;font-size:11px;color:#d8e8fd">Drag a column header here to group by that column</div>
<div class="sel" style="left:368px;top:316px;width:812px;height:18px">
<div class="cell" style="left:0;width:47px;background:#fff"></div>
<div class="cell" style="left:47px;width:86px;letter-spacing:-0.15px">0000001410</div>
<div class="cell" style="left:133px;width:112px;letter-spacing:-0.32px">BOLTON, Marny</div>
<div class="cell" style="left:245px;width:96px;letter-spacing:-0.42px">Business English PT</div>
<div class="cell" style="left:341px;width:76px;letter-spacing:0">16/01/2017</div>
<div class="cell" style="left:417px;width:82px;letter-spacing:0">30/06/2017</div>
<div class="cell" style="left:499px;width:75px;letter-spacing:-0.27px">18/24 wks</div>
<div class="cell" style="left:574px;width:54px">Male</div>
<div class="cell r" style="left:628px;width:45px;letter-spacing:0">66</div>
<div class="cell" style="left:673px;width:68px">Spain</div>
<div class="cell r" style="left:741px;width:71px;letter-spacing:0">70%</div>
</div>
<div class="cb" style="left:385px;top:319px"></div>
<svg style="left:386px;top:320px" width="9" height="9" viewBox="0 0 9 9"><path d="M1 4 L3.5 7 L8 1.5" stroke="#000" stroke-width="1.8" fill="none"/></svg>
<div style="left:368px;top:334px;width:812px;height:18px">
<div class="cell" style="left:0;width:47px;background:#fff"></div>
<div class="cell" style="left:47px;width:86px;letter-spacing:-0.15px">0000001372</div>
<div class="cell" style="left:133px;width:112px;letter-spacing:-0.32px">BROWN, Sara</div>
<div class="cell" style="left:245px;width:96px;letter-spacing:-0.42px">Business English PT</div>
<div class="cell" style="left:341px;width:76px;letter-spacing:0">20/02/2017</div>
<div class="cell" style="left:417px;width:82px;letter-spacing:0">04/08/2017</div>
<div class="cell" style="left:499px;width:75px;letter-spacing:-0.27px">13/24 wks</div>
<div class="cell" style="left:574px;width:54px">Male</div>
<div class="cell r" style="left:628px;width:45px;letter-spacing:0">40</div>
<div class="cell" style="left:673px;width:68px">Switzerland</div>
<div class="cell r" style="left:741px;width:71px;letter-spacing:0">75%</div>
</div>
<div class="cb" style="left:385px;top:337px"></div>
<svg style="left:386px;top:338px" width="9" height="9" viewBox="0 0 9 9"><path d="M1 4 L3.5 7 L8 1.5" stroke="#000" stroke-width="1.8" fill="none"/></svg>
<div style="left:368px;top:352px;width:812px;height:18px">
<div class="cell" style="left:0;width:47px;background:#fff"></div>
<div class="cell" style="left:47px;width:86px;letter-spacing:-0.15px">0000001356</div>
<div class="cell" style="left:133px;width:112px;letter-spacing:-0.32px">CARVER, Fiona</div>
<div class="cell" style="left:245px;width:96px;letter-spacing:-0.42px">General English</div>
<div class="cell" style="left:341px;width:76px;letter-spacing:0">17/04/2017</div>
<div class="cell" style="left:417px;width:82px;letter-spacing:0">21/07/2017</div>
<div class="cell" style="left:499px;width:75px;letter-spacing:-0.27px">05/14 wks</div>
<div class="cell" style="left:574px;width:54px">Female</div>
<div class="cell r" style="left:628px;width:45px;letter-spacing:0">25</div>
<div class="cell" style="left:673px;width:68px">Colombia</div>
<div class="cell r" style="left:741px;width:71px;letter-spacing:0">78%</div>
</div>
<div class="cb" style="left:385px;top:355px"></div>
<svg style="left:386px;top:356px" width="9" height="9" viewBox="0 0 9 9"><path d="M1 4 L3.5 7 L8 1.5" stroke="#000" stroke-width="1.8" fill="none"/></svg>
<div style="left:368px;top:370px;width:812px;height:18px">
<div class="cell" style="left:0;width:47px;background:#fff"></div>
<div class="cell" style="left:47px;width:86px;letter-spacing:-0.15px">0000001192</div>
<div class="cell" style="left:133px;width:112px;letter-spacing:-0.32px">INGRAM, Clinton</div>
<div class="cell" style="left:245px;width:96px;letter-spacing:-0.42px">Advanced IELTS</div>
<div class="cell" style="left:341px;width:76px;letter-spacing:0">20/03/2017</div>
<div class="cell" style="left:417px;width:82px;letter-spacing:0">09/06/2017</div>
<div class="cell" style="left:499px;width:75px;letter-spacing:-0.27px">09/12 wks</div>
<div class="cell" style="left:574px;width:54px">Male</div>
<div class="cell r" style="left:628px;width:45px;letter-spacing:0">24</div>
<div class="cell" style="left:673px;width:68px">Brazil</div>
<div class="cell r" style="left:741px;width:71px;letter-spacing:0">79%</div>
</div>
<div class="cb" style="left:385px;top:373px"></div>
<svg style="left:386px;top:374px" width="9" height="9" viewBox="0 0 9 9"><path d="M1 4 L3.5 7 L8 1.5" stroke="#000" stroke-width="1.8" fill="none"/></svg>
<div style="left:368px;top:388px;width:812px;height:18px">
<div class="cell" style="left:0;width:47px;background:#fff"></div>
<div class="cell" style="left:47px;width:86px;letter-spacing:-0.15px">0000001301</div>
<div class="cell" style="left:133px;width:112px;letter-spacing:-0.32px">RICH, Jerome</div>
<div class="cell" style="left:245px;width:96px;letter-spacing:-0.42px">General English</div>
<div class="cell" style="left:341px;width:76px;letter-spacing:0">27/03/2017</div>
<div class="cell" style="left:417px;width:82px;letter-spacing:0">16/06/2017</div>
<div class="cell" style="left:499px;width:75px;letter-spacing:-0.27px">08/12 wks</div>
<div class="cell" style="left:574px;width:54px">Male</div>
<div class="cell r" style="left:628px;width:45px;letter-spacing:0">65</div>
<div class="cell" style="left:673px;width:68px">Colombia</div>
<div class="cell r" style="left:741px;width:71px;letter-spacing:0">79%</div>
</div>
<div class="cb" style="left:385px;top:391px"></div>
<svg style="left:386px;top:392px" width="9" height="9" viewBox="0 0 9 9"><path d="M1 4 L3.5 7 L8 1.5" stroke="#000" stroke-width="1.8" fill="none"/></svg>
<div style="left:368px;top:406px;width:812px;height:18px">
<div class="cell" style="left:0;width:47px;background:#fff"></div>
<div class="cell" style="left:47px;width:86px;letter-spacing:-0.15px">0000001369</div>
<div class="cell" style="left:133px;width:112px;letter-spacing:-0.32px">GUERRA, Quin</div>
<div class="cell" style="left:245px;width:96px;letter-spacing:-0.42px">General English</div>
<div class="cell" style="left:341px;width:76px;letter-spacing:0">10/04/2017</div>
<div class="cell" style="left:417px;width:82px;letter-spacing:0">30/06/2017</div>
<div class="cell" style="left:499px;width:75px;letter-spacing:-0.27px">06/12 wks</div>
<div class="cell" style="left:574px;width:54px">Female</div>
<div class="cell r" style="left:628px;width:45px;letter-spacing:0">42</div>
<div class="cell" style="left:673px;width:68px">Colombia</div>
<div class="cell r" style="left:741px;width:71px;letter-spacing:0">83%</div>
</div>
<div class="cb" style="left:385px;top:409px"></div>
<svg style="left:386px;top:410px" width="9" height="9" viewBox="0 0 9 9"><path d="M1 4 L3.5 7 L8 1.5" stroke="#000" stroke-width="1.8" fill="none"/></svg>
<div style="left:368px;top:424px;width:812px;height:18px">
<div class="cell" style="left:0;width:47px;background:#fff"></div>
<div class="cell" style="left:47px;width:86px;letter-spacing:-0.15px">0000001263</div>
<div class="cell" style="left:133px;width:112px;letter-spacing:-0.32px">RODGERS, Rhona</div>
<div class="cell" style="left:245px;width:96px;letter-spacing:-0.42px">General English</div>
<div class="cell" style="left:341px;width:76px;letter-spacing:0">08/05/2017</div>
<div class="cell" style="left:417px;width:82px;letter-spacing:0">08/09/2017</div>
<div class="cell" style="left:499px;width:75px;letter-spacing:-0.27px">02/18 wks</div>
<div class="cell" style="left:574px;width:54px">Female</div>
<div class="cell r" style="left:628px;width:45px;letter-spacing:0">53</div>
<div class="cell" style="left:673px;width:68px">Venezuela</div>
<div class="cell r" style="left:741px;width:71px;letter-spacing:0">86%</div>
</div>
<div class="cb" style="left:385px;top:427px"></div>
<svg style="left:386px;top:428px" width="9" height="9" viewBox="0 0 9 9"><path d="M1 4 L3.5 7 L8 1.5" stroke="#000" stroke-width="1.8" fill="none"/></svg>
<div style="left:368px;top:442px;width:812px;height:18px">
<div class="cell" style="left:0;width:47px;background:#fff"></div>
<div class="cell" style="left:47px;width:86px;letter-spacing:-0.15px">0000000748</div>
<div class="cell" style="left:133px;width:112px;letter-spacing:-0.32px">LEBLANC, Lesley</div>
<div class="cell" style="left:245px;width:96px;letter-spacing:-0.42px">Advanced IELTS</div>
<div class="cell" style="left:341px;width:76px;letter-spacing:0">10/04/2017</div>
<div class="cell" style="left:417px;width:82px;letter-spacing:0">30/06/2017</div>
<div class="cell" style="left:499px;width:75px;letter-spacing:-0.27px">06/12 wks</div>
<div class="cell" style="left:574px;width:54px">Female</div>
<div class="cell r" style="left:628px;width:45px;letter-spacing:0">45</div>
<div class="cell" style="left:673px;width:68px">Colombia</div>
<div class="cell r" style="left:741px;width:71px;letter-spacing:0">87%</div>
</div>
<div class="cb" style="left:385px;top:445px"></div>
<svg style="left:386px;top:446px" width="9" height="9" viewBox="0 0 9 9"><path d="M1 4 L3.5 7 L8 1.5" stroke="#000" stroke-width="1.8" fill="none"/></svg>
<div style="left:368px;top:460px;width:812px;height:18px">
<div class="cell" style="left:0;width:47px;background:#fff"></div>
<div class="cell" style="left:47px;width:86px;letter-spacing:-0.15px">0000001248</div>
<div class="cell" style="left:133px;width:112px;letter-spacing:-0.32px">GAMBLE, Devin</div>
<div class="cell" style="left:245px;width:96px;letter-spacing:-0.42px">General English</div>
<div class="cell" style="left:341px;width:76px;letter-spacing:0">13/02/2017</div>
<div class="cell" style="left:417px;width:82px;letter-spacing:0">26/05/2017</div>
<div class="cell" style="left:499px;width:75px;letter-spacing:-0.27px">14/15 wks</div>
<div class="cell" style="left:574px;width:54px">Male</div>
<div class="cell r" style="left:628px;width:45px;letter-spacing:0">62</div>
<div class="cell" style="left:673px;width:68px">Brazil</div>
<div class="cell r" style="left:741px;width:71px;letter-spacing:0">90%</div>
</div>
<div class="cb" style="left:385px;top:463px"></div>
<svg style="left:386px;top:464px" width="9" height="9" viewBox="0 0 9 9"><path d="M1 4 L3.5 7 L8 1.5" stroke="#000" stroke-width="1.8" fill="none"/></svg>
<div style="left:368px;top:478px;width:812px;height:18px">
<div class="cell" style="left:0;width:47px;background:#fff"></div>
<div class="cell" style="left:47px;width:86px;letter-spacing:-0.15px">0000001252</div>
<div class="cell" style="left:133px;width:112px;letter-spacing:-0.32px">TYSON, Kevin</div>
<div class="cell" style="left:245px;width:96px;letter-spacing:-0.42px">Advanced IELTS</div>
<div class="cell" style="left:341px;width:76px;letter-spacing:0">06/03/2017</div>
<div class="cell" style="left:417px;width:82px;letter-spacing:0">26/05/2017</div>
<div class="cell" style="left:499px;width:75px;letter-spacing:-0.27px">11/12 wks</div>
<div class="cell" style="left:574px;width:54px">Male</div>
<div class="cell r" style="left:628px;width:45px;letter-spacing:0">32</div>
<div class="cell" style="left:673px;width:68px">Argentina</div>
<div class="cell r" style="left:741px;width:71px;letter-spacing:0">91%</div>
</div>
<div class="cb" style="left:385px;top:481px"></div>
<svg style="left:386px;top:482px" width="9" height="9" viewBox="0 0 9 9"><path d="M1 4 L3.5 7 L8 1.5" stroke="#000" stroke-width="1.8" fill="none"/></svg>
<div style="left:368px;top:496px;width:812px;height:18px">
<div class="cell" style="left:0;width:47px;background:#fff"></div>
<div class="cell" style="left:47px;width:86px;letter-spacing:-0.15px">0000001378</div>
<div class="cell" style="left:133px;width:112px;letter-spacing:-0.32px">HOWE, Brynn</div>
<div class="cell" style="left:245px;width:96px;letter-spacing:-0.42px">General English</div>
<div class="cell" style="left:341px;width:76px;letter-spacing:0">20/03/2017</div>
<div class="cell" style="left:417px;width:82px;letter-spacing:0">09/06/2017</div>
<div class="cell" style="left:499px;width:75px;letter-spacing:-0.27px">09/12 wks</div>
<div class="cell" style="left:574px;width:54px">Male</div>
<div class="cell r" style="left:628px;width:45px;letter-spacing:0">60</div>
<div class="cell" style="left:673px;width:68px">Brazil</div>
<div class="cell r" style="left:741px;width:71px;letter-spacing:0">100%</div>
</div>
<div class="cb" style="left:385px;top:499px"></div>
<svg style="left:386px;top:500px" width="9" height="9" viewBox="0 0 9 9"><path d="M1 4 L3.5 7 L8 1.5" stroke="#000" stroke-width="1.8" fill="none"/></svg>
<div style="left:368px;top:514px;width:812px;height:18px">
<div class="cell" style="left:0;width:47px;background:#fff"></div>
<div class="cell" style="left:47px;width:86px;letter-spacing:-0.15px">0000001434</div>
<div class="cell" style="left:133px;width:112px;letter-spacing:-0.32px">NICHOLSON, Shaeleigh</div>
<div class="cell" style="left:245px;width:96px;letter-spacing:-0.42px">General English - EAP</div>
<div class="cell" style="left:341px;width:76px;letter-spacing:0">08/05/2017</div>
<div class="cell" style="left:417px;width:82px;letter-spacing:0">16/06/2017</div>
<div class="cell" style="left:499px;width:75px;letter-spacing:-0.27px">02/06 wks</div>
<div class="cell" style="left:574px;width:54px">Female</div>
<div class="cell r" style="left:628px;width:45px;letter-spacing:0">22</div>
<div class="cell" style="left:673px;width:68px">Switzerland</div>
<div class="cell r" style="left:741px;width:71px;letter-spacing:0">100%</div>
</div>
<div class="cb" style="left:385px;top:517px"></div>
<svg style="left:386px;top:518px" width="9" height="9" viewBox="0 0 9 9"><path d="M1 4 L3.5 7 L8 1.5" stroke="#000" stroke-width="1.8" fill="none"/></svg>
<div style="left:368px;top:532px;width:812px;height:18px">
<div class="cell" style="left:0;width:47px;background:#fff"></div>
<div class="cell" style="left:47px;width:86px;letter-spacing:-0.15px">0000001368</div>
<div class="cell" style="left:133px;width:112px;letter-spacing:-0.32px">CHRISTIAN, Hanna</div>
<div class="cell" style="left:245px;width:96px;letter-spacing:-0.42px">General English</div>
<div class="cell" style="left:341px;width:76px;letter-spacing:0">10/04/2017</div>
<div class="cell" style="left:417px;width:82px;letter-spacing:0">30/06/2017</div>
<div class="cell" style="left:499px;width:75px;letter-spacing:-0.27px">06/12 wks</div>
<div class="cell" style="left:574px;width:54px">Male</div>
<div class="cell r" style="left:628px;width:45px;letter-spacing:0">57</div>
<div class="cell" style="left:673px;width:68px">Colombia</div>
<div class="cell r" style="left:741px;width:71px;letter-spacing:0">100%</div>
</div>
<div class="cb" style="left:385px;top:535px"></div>
<svg style="left:386px;top:536px" width="9" height="9" viewBox="0 0 9 9"><path d="M1 4 L3.5 7 L8 1.5" stroke="#000" stroke-width="1.8" fill="none"/></svg>
<div style="left:368px;top:550px;width:812px;height:18px">
<div class="cell" style="left:0;width:47px;background:#fff"></div>
<div class="cell" style="left:47px;width:86px;letter-spacing:-0.15px">0000001420</div>
<div class="cell" style="left:133px;width:112px;letter-spacing:-0.32px">MAYER, Quin</div>
<div class="cell" style="left:245px;width:96px;letter-spacing:-0.42px">General English</div>
<div class="cell" style="left:341px;width:76px;letter-spacing:0">15/05/2017</div>
<div class="cell" style="left:417px;width:82px;letter-spacing:0">04/08/2017</div>
<div class="cell" style="left:499px;width:75px;letter-spacing:-0.27px">01/12 wks</div>
<div class="cell" style="left:574px;width:54px">Male</div>
<div class="cell r" style="left:628px;width:45px;letter-spacing:0">16</div>
<div class="cell" style="left:673px;width:68px">Brazil</div>
<div class="cell r" style="left:741px;width:71px;letter-spacing:0">100%</div>
</div>
<div class="cb" style="left:385px;top:553px"></div>
<svg style="left:386px;top:554px" width="9" height="9" viewBox="0 0 9 9"><path d="M1 4 L3.5 7 L8 1.5" stroke="#000" stroke-width="1.8" fill="none"/></svg>
<div style="left:368px;top:297px;width:812px;height:20px;background:linear-gradient(#cadcf6,#b6cdf0 17px,#a8bedf 18px,#7590c0 18px,#7f9ac6 20px)">
<div style="left:786px;top:0;width:26px;height:16px;background:linear-gradient(90deg,#bcd060,#c4d800 4px)"></div>
<div class="ch" style="left:0px;width:47px">Arvd</div>
<div class="ch" style="left:47px;width:86px">Stud No</div>
<div style="left:47px;top:1px;width:1px;height:17px;background:#f4f8fe;box-shadow:-1px 0 #97acd2"></div>
<div class="ch" style="left:133px;width:112px">Student Name</div>
<div style="left:133px;top:1px;width:1px;height:17px;background:#f4f8fe;box-shadow:-1px 0 #97acd2"></div>
<div class="ch" style="left:245px;width:96px">Course Name</div>
<div style="left:245px;top:1px;width:1px;height:17px;background:#f4f8fe;box-shadow:-1px 0 #97acd2"></div>
<div class="ch" style="left:341px;width:76px">Start</div>
<div style="left:341px;top:1px;width:1px;height:17px;background:#f4f8fe;box-shadow:-1px 0 #97acd2"></div>
<div class="ch" style="left:417px;width:82px">End</div>
<div style="left:417px;top:1px;width:1px;height:17px;background:#f4f8fe;box-shadow:-1px 0 #97acd2"></div>
<div class="ch" style="left:499px;width:75px">Status</div>
<div style="left:499px;top:1px;width:1px;height:17px;background:#f4f8fe;box-shadow:-1px 0 #97acd2"></div>
<div class="ch" style="left:574px;width:54px">Gender</div>
<div style="left:574px;top:1px;width:1px;height:17px;background:#f4f8fe;box-shadow:-1px 0 #97acd2"></div>
<div class="ch" style="left:628px;width:45px">Age</div>
<div style="left:628px;top:1px;width:1px;height:17px;background:#f4f8fe;box-shadow:-1px 0 #97acd2"></div>
<div class="ch" style="left:673px;width:68px">Country</div>
<div style="left:673px;top:1px;width:1px;height:17px;background:#f4f8fe;box-shadow:-1px 0 #97acd2"></div>
<div class="ch" style="left:741px;width:71px">Overall At</div>
<div style="left:741px;top:1px;width:1px;height:17px;background:#f4f8fe;box-shadow:-1px 0 #97acd2"></div>
</div>
<div style="left:368px;top:316px;width:47px;height:18px;border:1px dotted #222"></div>
<svg style="left:1165px;top:303px" width="9" height="8" viewBox="0 0 9 8"><path d="M4.5 0.8 L8.2 7.5 H0.8 Z" fill="none" stroke="#f4f400" stroke-width="1"/></svg>
</body></html>
